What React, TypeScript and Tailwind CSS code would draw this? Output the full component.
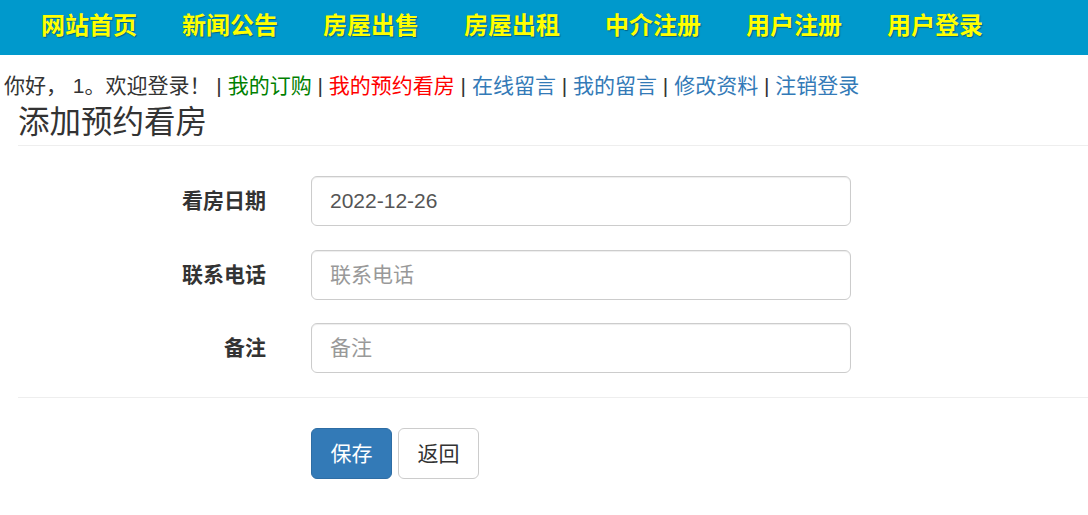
import { useState } from "react";

const navItems = ["网站首页", "新闻公告", "房屋出售", "房屋出租", "中介注册", "用户注册", "用户登录"];

const font = "font-['Liberation_Sans','Noto_Sans_CJK_SC',sans-serif]";

function Field({
  label,
  value,
  placeholder,
  onChange,
}: {
  label: string;
  value: string;
  placeholder?: string;
  onChange: (v: string) => void;
}) {
  return (
    <div className="flex items-center">
      <label className="w-[248px] ml-[18px] text-right text-[21px] font-bold text-[#333]">{label}</label>
      <input
        className="ml-[45px] w-[540px] h-[50px] rounded-[6px] border border-[#ccc] px-[18px] text-[21px] text-[#555] placeholder:text-[#999] shadow-[inset_0_1px_1px_rgba(0,0,0,0.075)] outline-none"
        value={value}
        placeholder={placeholder}
        onChange={(e) => onChange(e.target.value)}
      />
    </div>
  );
}

export default function App() {
  const [date, setDate] = useState("2022-12-26");
  const [phone, setPhone] = useState("");
  const [note, setNote] = useState("");

  return (
    <div className={`${font} bg-white min-h-[515px] text-[#333]`}>
      {/* Top nav */}
      <div className="h-[55px] bg-[#0099cc] flex items-center pl-[41px] pb-[4px] gap-[45px]">
        {navItems.map((item) => (
          <a key={item} href="#" className="text-[24px] leading-none font-bold text-[#ffff00] [text-shadow:1px_1px_1px_rgba(0,0,0,0.35)]">
            {item}
          </a>
        ))}
      </div>

      {/* User links */}
      <div className="mt-[18px] pl-[4px] text-[21px] leading-[26px] whitespace-nowrap">
        <span>你好， 1。欢迎登录！ </span>
        <span> | </span>
        <a href="#" className="text-[#008000]">我的订购</a>
        <span> | </span>
        <a href="#" className="text-[#ff0000]">我的预约看房</a>
        <span> | </span>
        <a href="#" className="text-[#337ab7]">在线留言</a>
        <span> | </span>
        <a href="#" className="text-[#337ab7]">我的留言</a>
        <span> | </span>
        <a href="#" className="text-[#337ab7]">修改资料</a>
        <span> | </span>
        <a href="#" className="text-[#337ab7]">注销登录</a>
      </div>

      <div className="ml-[18px]">
        <h2 className="mt-[5px] text-[31.5px] leading-[36px] text-[#333]">添加预约看房</h2>
        <div className="mt-[5px] border-t border-[#eee]" />
      </div>

      {/* Form */}
      <form className="mt-[30px] flex flex-col gap-[23.5px]" onSubmit={(e) => e.preventDefault()}>
        <Field label="看房日期" value={date} onChange={setDate} />
        <Field label="联系电话" value={phone} placeholder="联系电话" onChange={setPhone} />
        <Field label="备注" value={note} placeholder="备注" onChange={setNote} />
      </form>

      <div className="ml-[18px] mt-[24px] border-t border-[#eee]" />

      <div className="mt-[30px] ml-[311px] flex gap-[6px]">
        <button className="w-[81px] h-[51px] rounded-[6px] bg-[#337ab7] border border-[#2e6da4] text-white text-[21px]">
          保存
        </button>
        <button className="w-[81px] h-[51px] rounded-[6px] bg-white border border-[#ccc] text-[#333] text-[21px]">
          返回
        </button>
      </div>
    </div>
  );
}
